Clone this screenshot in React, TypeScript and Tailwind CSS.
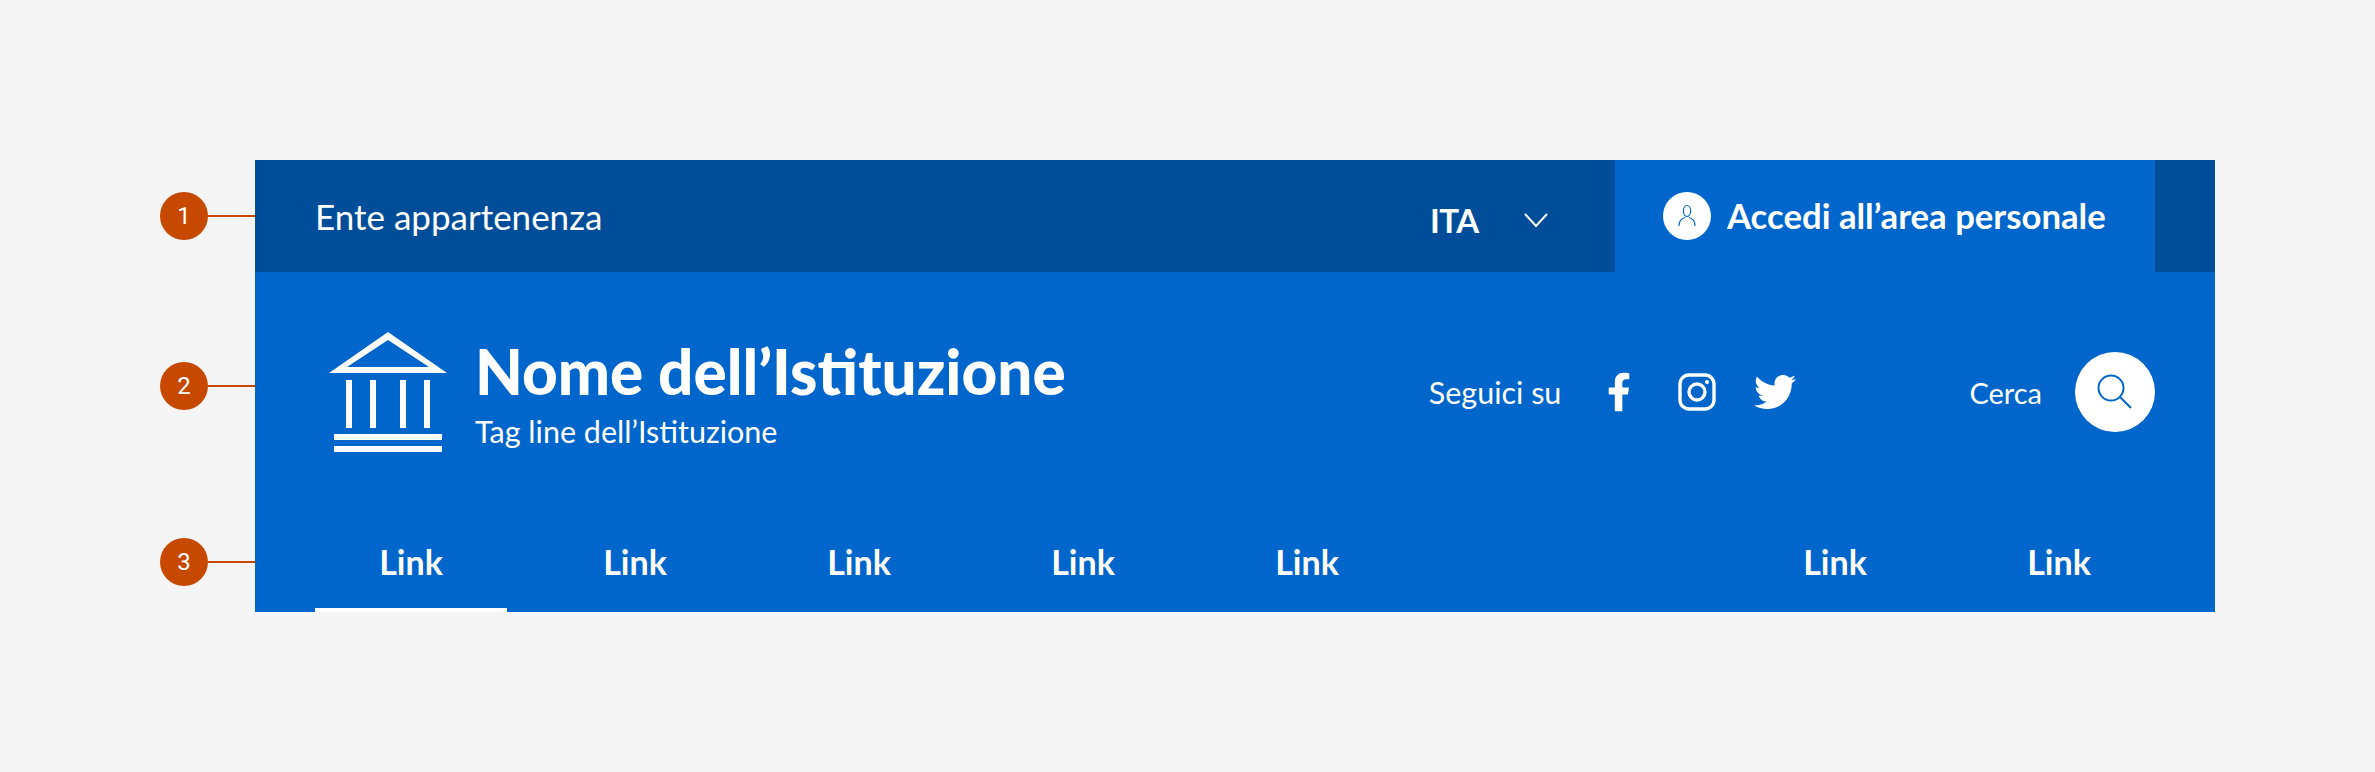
import { FaFacebookF, FaTwitter } from "react-icons/fa";

const font = "font-['Lato','Noto_Sans',sans-serif]";

function Badge({ n, badgeClass }: { n: number; badgeClass: string }) {
  return (
    <div className={`absolute left-[-95px] flex items-center ${badgeClass}`}>
      <span className="flex h-12 w-12 items-center justify-center rounded-full bg-[#c74900] font-['Roboto',sans-serif] text-[24px] leading-none text-white">
        {n}
      </span>
      <span className="h-[2px] w-[47px] bg-[#c74900]" />
    </div>
  );
}

function Link({ active }: { active?: boolean }) {
  return (
    <div
      className={`flex h-[100px] w-[192px] items-center justify-center border-y-4 border-t-transparent text-[34px] font-bold leading-none text-white ${active ? "border-b-white" : "border-b-transparent"}`}
    >
      Link
    </div>
  );
}

function Temple() {
  return (
    <svg width="120" height="120" viewBox="0 0 120 120" fill="white" className="shrink-0">
      <path fillRule="evenodd" d="M60 0 L119 41 L1 41 Z M60 8 L19 35 L101 35 Z" />
      <rect x="18" y="48" width="6" height="48" />
      <rect x="42" y="48" width="6" height="48" />
      <rect x="72" y="48" width="6" height="48" />
      <rect x="96" y="48" width="6" height="48" />
      <rect x="6" y="102" width="108" height="6" />
      <rect x="6" y="114" width="108" height="6" />
    </svg>
  );
}

export default function App() {
  return (
    <div className={`min-h-[772px] bg-[#f5f5f5] pl-[255px] pr-[160px] pt-[160px] ${font}`}>
      <div className="w-[1960px] bg-[#0066cc] text-white">
        <div className="relative flex h-[112px] items-center bg-[#004d99] pl-[60px] pr-[60px]">
          <Badge n={1} badgeClass="top-[32px]" />
          <span className="text-[35px] leading-none">Ente appartenenza</span>
          <div className="ml-auto flex items-center">
            <span className="-ml-[3px] mt-[8px] w-[94px] text-[33px] font-bold leading-none tracking-[-0.5px]">ITA</span>
            <svg width="24" height="14" viewBox="0 0 24 14" fill="none" stroke="white" strokeWidth="2" className="mt-2">
              <path d="M1 1 L12 13 L23 1" />
            </svg>
            <div className="ml-[67px] flex h-[112px] w-[540px] items-center bg-[#0066cc] pl-[48px]">
              <span className="flex h-12 w-12 items-center justify-center rounded-full bg-white">
                <svg width="18" height="24" viewBox="0 0 18 24" fill="none" stroke="#0066cc" strokeWidth="1.2">
                  <ellipse cx="9" cy="7" rx="3.6" ry="5.5" />
                  <path d="M1 22 C1 16 5 14 7 13.5 M17 22 C17 16 13 14 11 13.5" />
                </svg>
              </span>
              <span className="ml-4 text-[34.7px] font-bold leading-none">Accedi all’area personale</span>
            </div>
          </div>
        </div>

        <div className="relative flex h-[240px] items-center pl-[73px] pr-[60px]">
          <Badge n={2} badgeClass="top-[90px]" />
          <Temple />
          <div className="ml-[27px] mt-[2px] flex flex-col">
            <span className="text-[62px] font-black leading-[70px]">Nome dell’Istituzione</span>
            <span className="mt-[6px] text-[30.5px] leading-[38px]">Tag line dell’Istituzione</span>
          </div>
          <span className="ml-auto text-[30.5px] leading-none">Seguici su</span>
          <div className="ml-[46px] flex items-center">
            <FaFacebookF className="h-[42px] w-[24px]" />
            <svg width="38" height="38" viewBox="0 0 38 38" fill="none" stroke="white" strokeWidth="3.4" className="ml-[47px]">
              <rect x="2" y="2" width="34" height="34" rx="9" />
              <circle cx="19" cy="19" r="8" />
              <circle cx="29" cy="9" r="2" fill="white" stroke="none" />
            </svg>
            <FaTwitter className="ml-[38px] h-[42px] w-[42px]" />
          </div>
          <span className="ml-[173px] text-[29px] leading-none">Cerca</span>
          <span className="ml-[33px] flex h-20 w-20 items-center justify-center rounded-full bg-white">
            <svg width="36" height="36" viewBox="0 0 36 36" fill="none" stroke="#0066cc" strokeWidth="2">
              <circle cx="14" cy="14" r="12.5" />
              <path d="M23 23 L34 34" />
            </svg>
          </span>
        </div>

        <div className="relative flex items-center gap-8 px-[60px]">
          <Badge n={3} badgeClass="top-[26px]" />
          <Link active />
          <Link />
          <Link />
          <Link />
          <Link />
          <div className="ml-auto flex gap-8">
            <Link />
            <Link />
          </div>
        </div>
      </div>
    </div>
  );
}
